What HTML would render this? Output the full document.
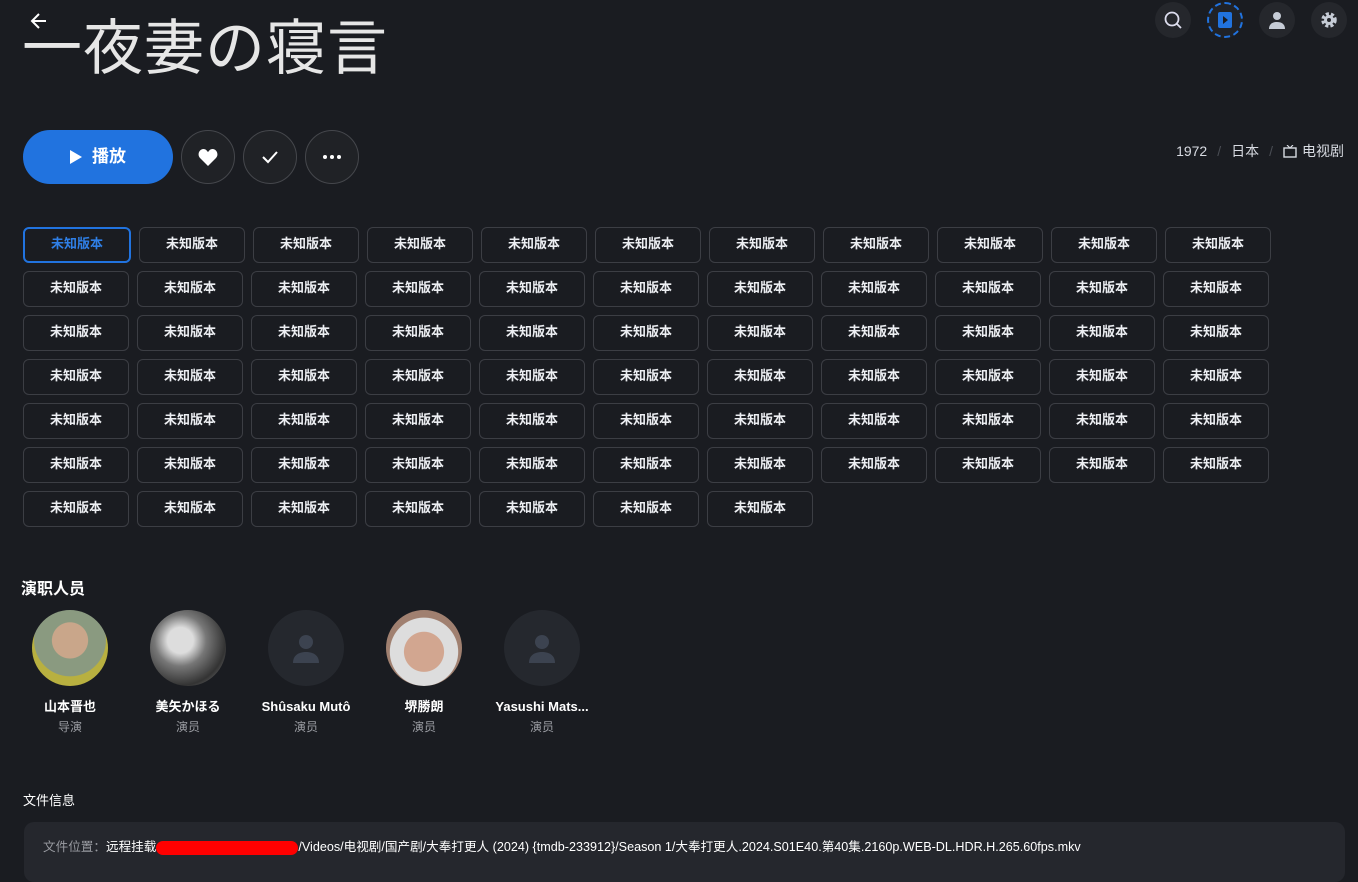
<!DOCTYPE html><html><head><meta charset="utf-8"><style>
*{box-sizing:border-box;margin:0;padding:0}
body{width:1358px;height:861px;overflow:hidden;background:#1a1c21;font-family:"Liberation Sans","Noto Sans CJK SC",sans-serif;color:#fff;position:relative}
.abs{position:absolute}
.title{left:22px;top:6px;font-size:60px;color:#e6e6e6;font-family:"Noto Sans CJK JP",sans-serif;font-weight:400;letter-spacing:1px;line-height:76px}
.top{width:36px;height:36px;border-radius:50%;background:#25272c;top:2px;display:flex;align-items:center;justify-content:center}
.play{left:23px;top:130px;width:150px;height:54px;border-radius:27px;background:#2173df;display:flex;align-items:center;justify-content:center;font-size:17px;font-weight:bold;gap:10px;line-height:20px}
.circ{top:130px;width:54px;height:54px;border-radius:50%;border:1px solid #45474c;background:#202226;display:flex;align-items:center;justify-content:center}
.meta{right:14px;top:143px;font-size:14px;color:#d8dbe2;display:flex;gap:10px;align-items:center;line-height:16px}
.meta .s{color:#4a4d54}
.grid{left:23px;top:227px;width:1260px;display:flex;flex-wrap:wrap;gap:8px}
.b{width:106px;height:36px;border:1px solid #3c3e44;border-radius:6px;display:flex;align-items:center;justify-content:center;font-size:13px;font-weight:bold;color:#eceef2;line-height:14px;padding-bottom:2px}
.b.f{width:108px;border:2px solid #2173df;color:#2f7fe6}
.h{left:21px;top:580px;font-size:16px;font-weight:bold;line-height:20px}
.p{top:610px;width:110px;text-align:center}
.av{width:76px;height:76px;border-radius:50%;margin:0 auto;background:#25282e;display:flex;align-items:center;justify-content:center;overflow:hidden}
.n{font-size:13px;font-weight:bold;margin-top:13px;height:16px;line-height:16px}
.r{font-size:12px;color:#9a9ca2;margin-top:4px;height:16px;line-height:16px}
.panel{left:24px;top:822px;width:1321px;height:60px;background:#25272d;border-radius:10px;padding:17px 19px;font-size:12.6px;color:#fff;line-height:16px}
</style></head><body>
<svg class="abs" style="left:30px;top:12px" width="18" height="18" viewBox="0 0 18 18"><path d="M16 9H3M9 2L2 9l7 7" stroke="#fff" stroke-width="2" fill="none"/></svg>
<div class="abs title">一夜妻の寝言</div>
<div class="abs top" style="left:1155px"><svg width="20" height="20" viewBox="0 0 20 20"><circle cx="9" cy="9" r="6.5" stroke="#dde" stroke-width="1.8" fill="none"/><path d="M14 14l4 4" stroke="#dde" stroke-width="1.8"/></svg></div>
<div class="abs top" style="left:1207px;background:#202227;border:2px dashed #2173df"><svg width="16" height="18" viewBox="0 0 16 18"><rect x="1" y="1" width="14" height="16" rx="2" fill="#2173df"/><path d="M6 5l5 4-5 4z" fill="#1a1c21"/></svg></div>
<div class="abs top" style="left:1259px"><svg width="18" height="18" viewBox="0 0 18 18"><circle cx="9" cy="5" r="4" fill="#c6ccd6"/><path d="M1 18c0-5 3.5-7 8-7s8 2 8 7z" fill="#c6ccd6"/></svg></div>
<div class="abs top" style="left:1311px"><svg width="18" height="18" viewBox="0 0 18 18"><circle cx="9" cy="9" r="6" fill="none" stroke="#c6ccd6" stroke-width="3.5" stroke-dasharray="3 2"/><circle cx="9" cy="9" r="5" fill="#c6ccd6"/><circle cx="9" cy="9" r="2" fill="#25272c"/></svg></div>
<div class="abs play"><svg width="12" height="14" viewBox="0 0 12 14"><path d="M0 0l12 7-12 7z" fill="#fff"/></svg>播放</div>
<div class="abs circ" style="left:181px"><svg width="20" height="18" viewBox="0 0 20 18"><path d="M10 18L2 10C-1 7 1 1 5.5 1 8 1 9 3 10 4c1-1 2-3 4.5-3C19 1 21 7 18 10z" fill="#fff"/></svg></div>
<div class="abs circ" style="left:243px"><svg width="18" height="14" viewBox="0 0 18 14"><path d="M2 7l5 5 9-10" stroke="#fff" stroke-width="2" fill="none"/></svg></div>
<div class="abs circ" style="left:305px"><svg width="20" height="4" viewBox="0 0 20 4"><circle cx="3" cy="2" r="2" fill="#fff"/><circle cx="10" cy="2" r="2" fill="#fff"/><circle cx="17" cy="2" r="2" fill="#fff"/></svg></div>
<div class="abs meta"><span>1972</span><span class="s">/</span><span>日本</span><span class="s">/</span><span style="display:flex;align-items:center;gap:5px"><svg width="14" height="13" viewBox="0 0 14 13"><rect x="1" y="3" width="12" height="9" fill="none" stroke="#d8dbe2" stroke-width="1.4"/><path d="M4 0l3 3 3-3" stroke="#d8dbe2" stroke-width="1.2" fill="none"/></svg>电视剧</span></div>
<div class="abs grid">
<div class="b f">未知版本</div><div class="b">未知版本</div><div class="b">未知版本</div><div class="b">未知版本</div><div class="b">未知版本</div><div class="b">未知版本</div><div class="b">未知版本</div><div class="b">未知版本</div><div class="b">未知版本</div><div class="b">未知版本</div><div class="b">未知版本</div>
<div class="b">未知版本</div><div class="b">未知版本</div><div class="b">未知版本</div><div class="b">未知版本</div><div class="b">未知版本</div><div class="b">未知版本</div><div class="b">未知版本</div><div class="b">未知版本</div><div class="b">未知版本</div><div class="b">未知版本</div><div class="b">未知版本</div>
<div class="b">未知版本</div><div class="b">未知版本</div><div class="b">未知版本</div><div class="b">未知版本</div><div class="b">未知版本</div><div class="b">未知版本</div><div class="b">未知版本</div><div class="b">未知版本</div><div class="b">未知版本</div><div class="b">未知版本</div><div class="b">未知版本</div>
<div class="b">未知版本</div><div class="b">未知版本</div><div class="b">未知版本</div><div class="b">未知版本</div><div class="b">未知版本</div><div class="b">未知版本</div><div class="b">未知版本</div><div class="b">未知版本</div><div class="b">未知版本</div><div class="b">未知版本</div><div class="b">未知版本</div>
<div class="b">未知版本</div><div class="b">未知版本</div><div class="b">未知版本</div><div class="b">未知版本</div><div class="b">未知版本</div><div class="b">未知版本</div><div class="b">未知版本</div><div class="b">未知版本</div><div class="b">未知版本</div><div class="b">未知版本</div><div class="b">未知版本</div>
<div class="b">未知版本</div><div class="b">未知版本</div><div class="b">未知版本</div><div class="b">未知版本</div><div class="b">未知版本</div><div class="b">未知版本</div><div class="b">未知版本</div><div class="b">未知版本</div><div class="b">未知版本</div><div class="b">未知版本</div><div class="b">未知版本</div>
<div class="b">未知版本</div><div class="b">未知版本</div><div class="b">未知版本</div><div class="b">未知版本</div><div class="b">未知版本</div><div class="b">未知版本</div><div class="b">未知版本</div>
</div>
<div class="abs h">演职人员</div>
<div class="abs p" style="left:15px"><div class="av" style="background:radial-gradient(circle at 50% 40%,#c9a68a 0 30%,#8a9a80 31% 60%,#b8b040 61%)"></div><div class="n">山本晋也</div><div class="r">导演</div></div>
<div class="abs p" style="left:133px"><div class="av" style="background:radial-gradient(circle at 40% 40%,#ddd 0 20%,#777 40%,#333 70%,#999)"></div><div class="n">美矢かほる</div><div class="r">演员</div></div>
<div class="abs p" style="left:251px"><div class="av"><svg width="30" height="30" viewBox="0 0 30 30"><circle cx="15" cy="9" r="7" fill="#3c4350"/><path d="M2 30c0-8 6-11 13-11s13 3 13 11z" fill="#3c4350"/></svg></div><div class="n">Shûsaku Mutô</div><div class="r">演员</div></div>
<div class="abs p" style="left:369px"><div class="av" style="background:radial-gradient(circle at 50% 55%,#d2a690 0 35%,#ddd 36% 60%,#a08070 61%)"></div><div class="n">堺勝朗</div><div class="r">演员</div></div>
<div class="abs p" style="left:487px"><div class="av"><svg width="30" height="30" viewBox="0 0 30 30"><circle cx="15" cy="9" r="7" fill="#3c4350"/><path d="M2 30c0-8 6-11 13-11s13 3 13 11z" fill="#3c4350"/></svg></div><div class="n">Yasushi Mats...</div><div class="r">演员</div></div>
<div class="abs" style="left:23px;top:793px;font-size:13px;line-height:16px">文件信息</div>
<div class="abs panel"><span style="color:#9a9ca2">文件位置：</span>远程挂载<span style="display:inline-block;width:142px;height:14px;background:#f00;border-radius:7px;vertical-align:middle"></span>/Videos/电视剧/国产剧/大奉打更人 (2024) {tmdb-233912}/Season 1/大奉打更人.2024.S01E40.第40集.2160p.WEB-DL.HDR.H.265.60fps.mkv</div>
</body></html>
